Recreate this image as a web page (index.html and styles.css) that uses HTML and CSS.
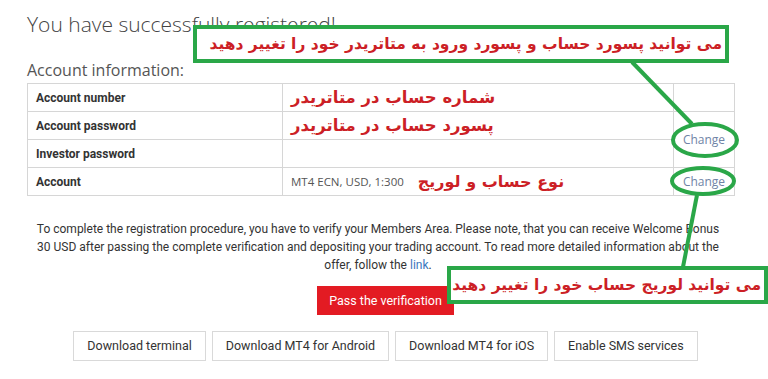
FILE: index.html
```html
<!DOCTYPE html>
<html lang="en">
<head>
<meta charset="utf-8">
<title>Registration</title>
<link rel="stylesheet" href="styles.css">
</head>
<body>
<div class="page">
  <h1 class="title">You have successfully registered!</h1>
  <h2 class="subtitle">Account information:</h2>
  <table class="info">
    <tr>
      <th>Account number</th>
      <td class="val"><span class="fa" dir="rtl">شماره حساب در متاتریدر</span></td>
      <td class="chg"></td>
    </tr>
    <tr>
      <th>Account password</th>
      <td class="val"><span class="fa" dir="rtl">پسورد حساب در متاتریدر</span></td>
      <td class="chg" rowspan="2"><a class="change" href="#">Change</a></td>
    </tr>
    <tr>
      <th>Investor password</th>
      <td class="val"></td>
    </tr>
    <tr>
      <th>Account</th>
      <td class="val"><span class="plain">MT4 ECN, USD, 1:300</span><span class="fa fa-gap" dir="rtl">نوع حساب و لوریج</span></td>
      <td class="chg"><a class="change" href="#">Change</a></td>
    </tr>
  </table>
  <p class="note">To complete the registration procedure, you have to verify your Members Area. Please note, that you can receive Welcome Bonus 30 USD after passing the complete verification and depositing your trading account. To read more detailed information about the offer, follow the <a class="link" href="#">link</a>.</p>
  <div class="cta"><a class="btn-primary" href="#">Pass the verification</a></div>
  <div class="downloads">
    <a class="btn" href="#">Download terminal</a>
    <a class="btn" href="#">Download MT4 for Android</a>
    <a class="btn" href="#">Download MT4 for iOS</a>
    <a class="btn" href="#">Enable SMS services</a>
  </div>

  <div class="callout callout-top" dir="rtl">می توانید پسورد حساب و پسورد ورود به متاتریدر خود را تغییر دهید</div>
  <div class="callout callout-bottom" dir="rtl">می توانید لوریج حساب خود را تغییر دهید</div>
  <svg class="marks" width="768" height="379" viewBox="0 0 768 379">
    <line x1="632" y1="62" x2="692" y2="124" />
    <line x1="697" y1="195" x2="683" y2="267" />
    <ellipse cx="705" cy="140" rx="32" ry="16" />
    <ellipse cx="703" cy="181" rx="31" ry="13" />
  </svg>
</div>
</body>
</html>
```
FILE: styles.css
```css
html, body {
  margin: 0;
  padding: 0;
  background: #fff;
}
.page {
  position: relative;
  width: 768px;
  height: 379px;
  overflow: hidden;
  font-family: "Open Sans", "DejaVu Sans", sans-serif;
  color: #333;
}
.title {
  margin: 0;
  padding: 10px 0 0 27px;
  font-size: 21px;
  line-height: 28px;
  font-weight: 300;
  color: #444;
}
.subtitle {
  margin: 0;
  padding: 21px 0 0 27px;
  font-size: 16px;
  line-height: 22px;
  font-weight: 400;
  color: #555;
}
.info {
  margin: 2px 0 0 27px;
  width: 708px;
  border-collapse: collapse;
  font-size: 12px;
}
.info th, .info td {
  border: 1px solid #d6d6d6;
  height: 27px;
  padding: 0 8px;
  vertical-align: middle;
}
.info th {
  width: 238px;
  text-align: left;
  font-family: Roboto, "Open Sans", sans-serif;
  font-weight: 700;
  font-size: 12px;
  color: #333;
}
.info .val {
  color: #555;
  font-size: 11.5px;
}
.info .chg {
  width: 60px;
  text-align: center;
  padding: 0;
}
.change {
  color: #6f84a6;
  text-decoration: none;
  font-size: 12px;
}
.fa {
  display: inline-block;
  font-family: "DejaVu Sans", sans-serif;
  font-weight: 700;
  font-size: 16.5px;
  color: #cc1f26;
  vertical-align: middle;
  white-space: nowrap;
}
.fa-gap {
  margin-left: 14px;
  font-size: 16px;
}
.plain {
  vertical-align: middle;
}
.note {
  margin: 24px 0 0 31px;
  width: 694px;
  text-align: center;
  font-family: Roboto, "Open Sans", sans-serif;
  font-size: 12px;
  line-height: 18px;
  color: #333;
}
.link {
  color: #3a78bd;
  text-decoration: none;
}
.cta {
  display: flex;
  justify-content: center;
  margin: 12px 0 0 0;
  padding-left: 3px;
}
.btn-primary {
  display: block;
  width: 137px;
  height: 29px;
  line-height: 29px;
  text-align: center;
  background: #e31b23;
  color: #fff;
  font-family: Roboto, "Open Sans", sans-serif;
  font-size: 12.5px;
  text-decoration: none;
}
.downloads {
  display: flex;
  justify-content: center;
  gap: 6px;
  margin: 16px 0 0 0;
  padding-left: 3px;
}
.btn {
  display: block;
  height: 28px;
  line-height: 28px;
  padding: 0 13px;
  border: 1px solid #d9d9d9;
  color: #333;
  font-family: Roboto, "Open Sans", sans-serif;
  font-size: 12.5px;
  text-decoration: none;
}
.callout {
  position: absolute;
  box-sizing: border-box;
  border: 4px solid #2aa748;
  background: #fff;
  font-family: "DejaVu Sans", sans-serif;
  font-weight: 700;
  color: #cc1f26;
  text-align: right;
  padding: 0 3px;
  white-space: nowrap;
  overflow: hidden;
}
.callout-top {
  left: 193px;
  top: 25px;
  width: 536px;
  height: 38px;
  font-size: 15.5px;
  line-height: 30px;
}
.callout-bottom {
  left: 447px;
  top: 266px;
  width: 321px;
  height: 38px;
  font-size: 15.5px;
  line-height: 30px;
}
.marks {
  position: absolute;
  left: 0;
  top: 0;
  pointer-events: none;
}
.marks line, .marks ellipse {
  stroke: #2aa748;
  stroke-width: 4;
  fill: none;
}
```
